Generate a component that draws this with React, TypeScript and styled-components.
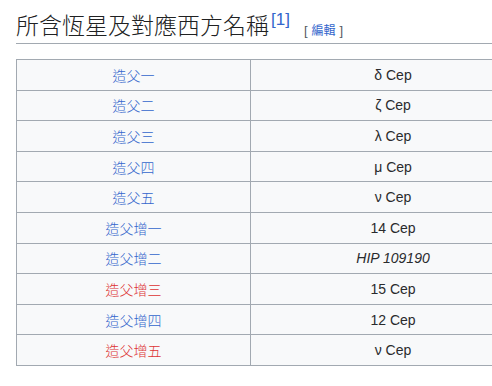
import React from "react";
import styled, { createGlobalStyle } from "styled-components";

const GlobalStyle = createGlobalStyle`
  html, body {
    margin: 0;
    padding: 0;
    background: #fff;
    overflow: hidden;
  }
  body {
    font-family: "Liberation Sans", Arial, "Noto Sans CJK TC", sans-serif;
    color: #202122;
  }
`;

const StyledPage = styled.div`
  padding: 9px 0 0 16px;
  width: 520px;
`;

const StyledHeading = styled.h2`
  margin: 0;
  padding-bottom: 0;
  font-family: "Liberation Sans", "Noto Sans CJK TC", sans-serif;
  font-weight: 300;
  font-size: 23px;
  line-height: 34px;
  height: 34px;
  color: #202122;
  border-bottom: 1px solid #a2a9b1;
  white-space: nowrap;
`;

const StyledSup = styled.sup`
  font-size: 17px;
  line-height: 1;
  color: #3366cc;
  position: relative;
  top: -9px;
  margin-left: 2px;
  vertical-align: baseline;
`;

const StyledEdit = styled.span`
  font-size: 13px;
  color: #54595d;
  margin-left: 14px;
  font-weight: normal;
  position: relative;
  top: 1px;
  font-family: "Liberation Sans", "Noto Sans CJK TC", sans-serif;
`;

const StyledEditLink = styled.a`
  color: #3366cc;
  text-decoration: none;
  margin: 0 4px;
  font-size: 12px;
`;

const StyledTable = styled.table`
  margin-top: 15px;
  border-collapse: collapse;
  width: 520px;
  background: #f8f9fa;
  font-size: 14px;
`;

const StyledCell = styled.td<{ $first?: boolean }>`
  border: 1px solid #a2a9b1;
  text-align: center;
  padding: 0;
  width: ${(p) => (p.$first ? "233px" : "auto")};
`;

const StyledCellInner = styled.div`
  height: 29.6px;
  display: flex;
  align-items: center;
  justify-content: center;
  overflow: hidden;
`;

const StyledName = styled.a<{ $missing?: boolean }>`
  color: ${(p) => (p.$missing ? "#d33" : "#36c")};
  text-decoration: none;
  font-family: "Noto Sans CJK TC", sans-serif;
  font-weight: 300;
  line-height: 20px;
`;

const StyledWestern = styled.span<{ $italic?: boolean }>`
  font-style: ${(p) => (p.$italic ? "italic" : "normal")};
  color: #2a2b2d;
  line-height: 20px;
`;

const rows = [
  { name: "造父一", west: "δ Cep" },
  { name: "造父二", west: "ζ Cep" },
  { name: "造父三", west: "λ Cep" },
  { name: "造父四", west: "μ Cep" },
  { name: "造父五", west: "ν Cep" },
  { name: "造父增一", west: "14 Cep" },
  { name: "造父增二", west: "HIP 109190", italic: true },
  { name: "造父增三", west: "15 Cep", missing: true },
  { name: "造父增四", west: "12 Cep" },
  { name: "造父增五", west: "ν Cep", missing: true },
];

const App = () => {
  return (
    <StyledPage>
      <GlobalStyle />
      <StyledHeading>
        所含恆星及對應西方名稱
        <StyledSup>[1]</StyledSup>
        <StyledEdit>
          [<StyledEditLink href="#">編輯</StyledEditLink>]
        </StyledEdit>
      </StyledHeading>
      <StyledTable>
        <tbody>
          {rows.map((r) => (
            <tr key={r.name}>
              <StyledCell $first>
                <StyledCellInner>
                  <StyledName href="#" $missing={r.missing}>
                    {r.name}
                  </StyledName>
                </StyledCellInner>
              </StyledCell>
              <StyledCell>
                <StyledCellInner>
                  <StyledWestern $italic={r.italic}>{r.west}</StyledWestern>
                </StyledCellInner>
              </StyledCell>
            </tr>
          ))}
        </tbody>
      </StyledTable>
    </StyledPage>
  );
};

export default App;
